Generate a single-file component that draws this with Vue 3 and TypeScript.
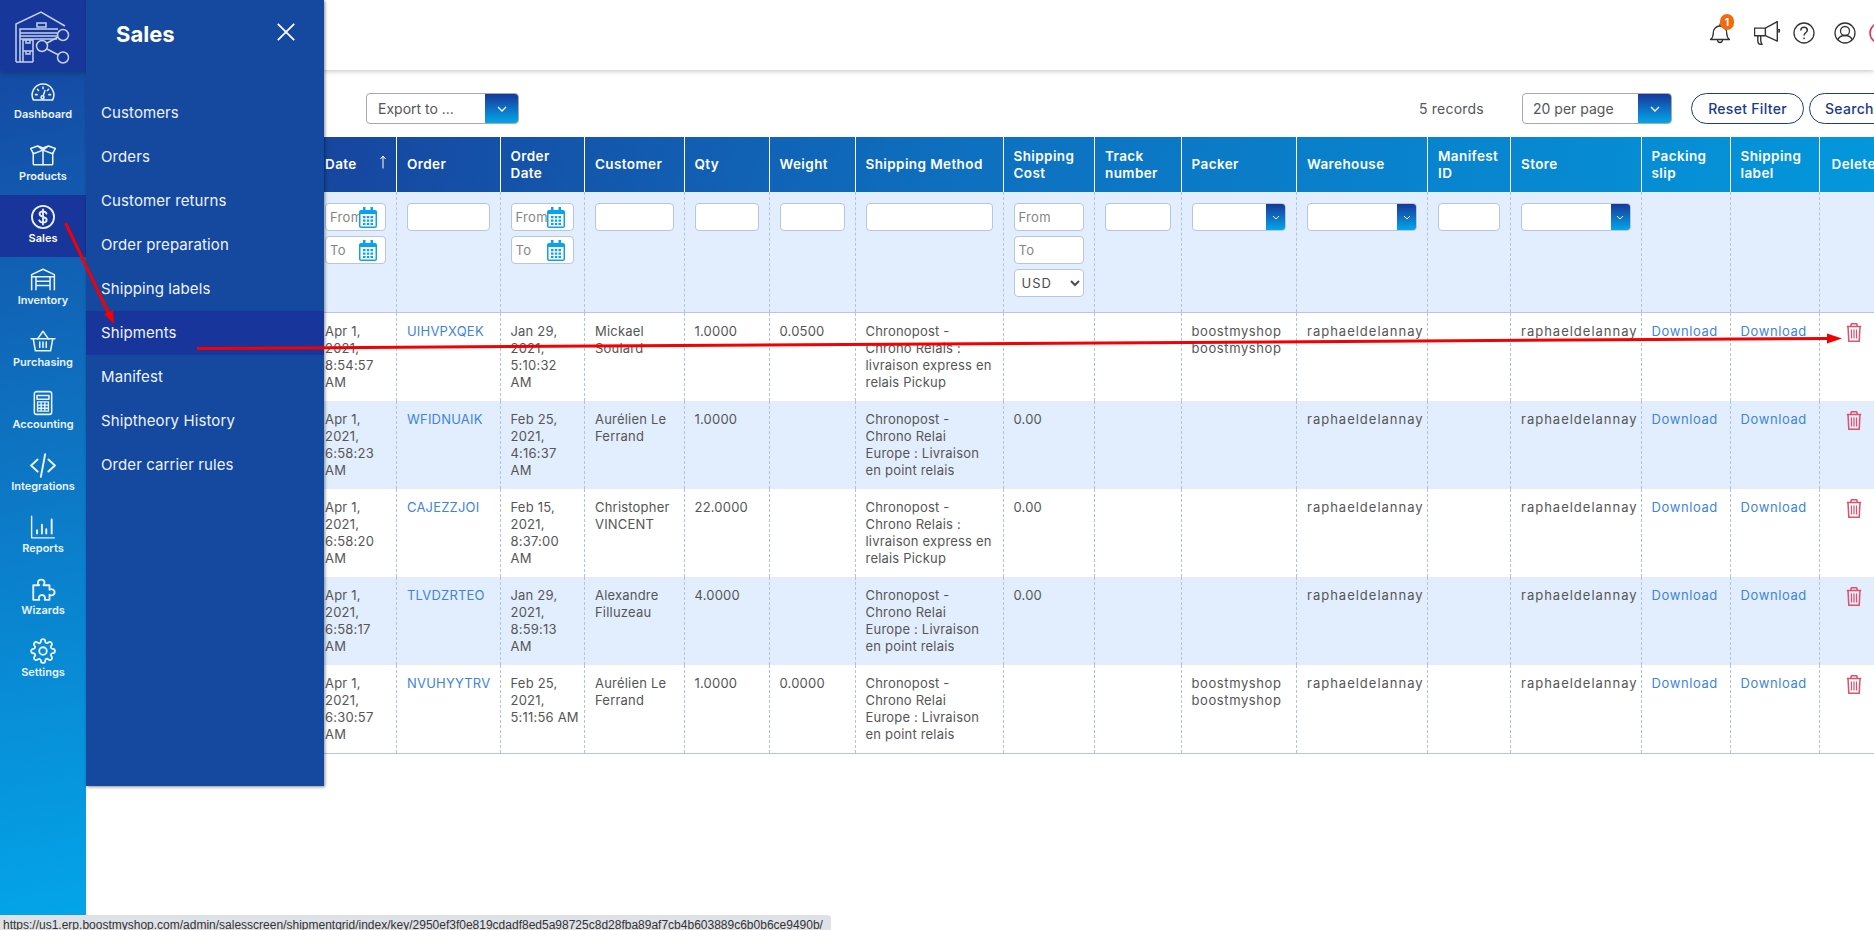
<script setup lang="ts">
interface NavItem { label: string; icon: string; active?: boolean }
const nav: NavItem[] = [
  { label: 'Dashboard', icon: '<path d="M3.2 18.5a10 10 0 1 1 17.6 0z"/><path d="M12 6.5v1.6M6.8 8.6l1.1 1.1M17.2 8.6l-1.1 1.1M5 13.5h1.6M19 13.5h-1.6"/><circle cx="11.6" cy="16" r="1.4"/><path d="M12.2 14.6l1.6-4.8"/>' },
  { label: 'Products', icon: '<path d="M3 10v10c0 .6.4 1 1 1h16c.6 0 1-.4 1-1V10"/><path d="M12 7.500V21"/><path d="M12 7.500L7 3.700.6 6l2.600 4.800zM12 7.500l5-3.800L23.400 6l-2.600 4.800zM7 3.700l5 1.800 5-1.800"/>' },
  { label: 'Sales', active: true, icon: '<circle cx="12" cy="12" r="10.2" stroke-width="1.7"/><path stroke-width="1.7" d="M15.2 8.8c-.5-1.3-1.700-2-3.200-2-1.900 0-3.200 1-3.200 2.500 0 3.500 6.600 1.900 6.600 5.300 0 1.600-1.400 2.600-3.400 2.600-1.700 0-3-.8-3.500-2.200M12 5v14"/>' },
  { label: 'Inventory', icon: '<path d="M1.500 22V8L12 3l10.500 5v14"/><path d="M1.500 10h21M5.500 10v12M18.500 10v12M5.500 14h13M5.500 18h13"/>' },
  { label: 'Purchasing', icon: '<path d="M1 10h22M3 10l2 11h14l2-11"/><path d="M7 10l5-7 5 7"/><path d="M9 13v5M12 13v5M15 13v5"/>' },
  { label: 'Accounting', icon: '<rect x="4" y="1.500" width="16" height="21" rx="2"/><path d="M6.500 5h11v3.500h-11z"/><path d="M7 11h10v8.500H7zM10.300 11v8.500M13.700 11v8.500M7 14h10M7 16.800h10" stroke-width="1.300"/>' },
  { label: 'Integrations', icon: '<path stroke-width="1.800" d="M7 7l-6 5.500L7 18M17 7l6 5.500L17 18M14 2l-4 21"/>' },
  { label: 'Reports', icon: '<path stroke-width="1.300" d="M1.500 2v20h21"/><path stroke-width="1.800" d="M6.500 18v-3M11 18v-8M15 18v-4M20 18V5"/>' },
  { label: 'Wizards', icon: '<path stroke-width="1.700" d="M3 8.500h5.500c-1.200-1-1.500-2-1.200-3 .4-1.500 1.800-2.300 3.200-2.200 1.500.1 2.800 1.200 2.900 2.700 0 .9-.3 1.700-1 2.500H18v4.300c.8-.6 1.700-.8 2.600-.5 1.300.4 2.100 1.500 2.100 2.800 0 1.300-.9 2.400-2.100 2.700-.9.300-1.800 0-2.600-.6V22h-4.500c.5-.9.600-1.800.2-2.700-.5-1.100-1.500-1.800-2.700-1.800s-2.300.7-2.700 1.800c-.3.900-.2 1.800.3 2.700H3z"/>' },
  { label: 'Settings', icon: '<circle cx="12" cy="12" r="3.500" stroke-width="1.700"/><path stroke-width="1.700" d="M19.400 15a1.650 1.650 0 0 0 .33 1.820l.06.06a2 2 0 0 1 0 2.830 2 2 0 0 1-2.830 0l-.06-.06a1.650 1.650 0 0 0-1.820-.33 1.650 1.650 0 0 0-1 1.510V21a2 2 0 0 1-2 2 2 2 0 0 1-2-2v-.09A1.650 1.650 0 0 0 9 19.400a1.650 1.650 0 0 0-1.820.33l-.06.06a2 2 0 0 1-2.830 0 2 2 0 0 1 0-2.830l.06-.06a1.650 1.650 0 0 0 .33-1.820 1.650 1.650 0 0 0-1.510-1H3a2 2 0 0 1-2-2 2 2 0 0 1 2-2h.09A1.650 1.650 0 0 0 4.600 9a1.650 1.650 0 0 0-.33-1.820l-.06-.06a2 2 0 0 1 0-2.830 2 2 0 0 1 2.830 0l.06.06a1.650 1.650 0 0 0 1.820.33H9a1.650 1.650 0 0 0 1-1.510V3a2 2 0 0 1 2-2 2 2 0 0 1 2 2v.09a1.650 1.650 0 0 0 1 1.510 1.650 1.650 0 0 0 1.820-.33l.06-.06a2 2 0 0 1 2.830 0 2 2 0 0 1 0 2.830l-.06.06a1.650 1.650 0 0 0-.33 1.820V9a1.650 1.650 0 0 0 1.510 1H21a2 2 0 0 1 2 2 2 2 0 0 1-2 2h-.09a1.650 1.650 0 0 0-1.510 1z"/>' }
]

const menu = ['Customers', 'Orders', 'Customer returns', 'Order preparation', 'Shipping labels', 'Shipments', 'Manifest', 'Shiptheory History', 'Order carrier rules']

const widths = [81.5, 103.5, 84.5, 99.5, 85, 86, 148, 91.5, 86.5, 115.5, 131, 83, 130.5, 89, 89, 81]
const headers = ['Date', 'Order', 'Order\nDate', 'Customer', 'Qty', 'Weight', 'Shipping Method', 'Shipping\nCost', 'Track\nnumber', 'Packer', 'Warehouse', 'Manifest\nID', 'Store', 'Packing\nslip', 'Shipping\nlabel', 'Delete']

interface Row { date: string; order: string; odate: string; customer: string; qty: string; weight: string; method: string; cost: string; packer: string }
const relais = 'Chronopost -\nChrono Relais :\nlivraison express en\nrelais Pickup'
const europe = 'Chronopost -\nChrono Relai\nEurope : Livraison\nen point relais'
const bms = 'boostmyshop\nboostmyshop'
const rows: Row[] = [
  { date: 'Apr 1,\n2021,\n8:54:57\nAM', order: 'UIHVPXQEK', odate: 'Jan 29,\n2021,\n5:10:32\nAM', customer: 'Mickael\nSoulard', qty: '1.0000', weight: '0.0500', method: relais, cost: '', packer: bms },
  { date: 'Apr 1,\n2021,\n6:58:23\nAM', order: 'WFIDNUAIK', odate: 'Feb 25,\n2021,\n4:16:37\nAM', customer: 'Aurélien Le\nFerrand', qty: '1.0000', weight: '', method: europe, cost: '0.00', packer: '' },
  { date: 'Apr 1,\n2021,\n6:58:20\nAM', order: 'CAJEZZJOI', odate: 'Feb 15,\n2021,\n8:37:00\nAM', customer: 'Christopher\nVINCENT', qty: '22.0000', weight: '', method: relais, cost: '0.00', packer: '' },
  { date: 'Apr 1,\n2021,\n6:58:17\nAM', order: 'TLVDZRTEO', odate: 'Jan 29,\n2021,\n8:59:13\nAM', customer: 'Alexandre\nFilluzeau', qty: '4.0000', weight: '', method: europe, cost: '0.00', packer: '' },
  { date: 'Apr 1,\n2021,\n6:30:57\nAM', order: 'NVUHYYTRV', odate: 'Feb 25,\n2021,\n5:11:56 AM', customer: 'Aurélien Le\nFerrand', qty: '1.0000', weight: '0.0000', method: europe, cost: '', packer: bms }
]
const textFilters = [1, 3, 4, 5, 6, 8, 11]
const selectFilters = [9, 10, 12]
const dateFilters = [0, 2]
</script>

<template>
  <div class="app">
    <aside class="sidebar">
      <div class="logo">
        <svg width="86" height="71" viewBox="0 0 86 71" fill="none" stroke="#c3d0ea" stroke-width="1.500">
          <path d="M16 62V24L41 12l24 14" />
          <path d="M37 23h9v4h-9zM20 62V29h38M20 33h37M20 36h37M20 39h37" />
          <path d="M23 62V40h10v22M23 51h10M26 40v3h4v-3M26 51v3h4v-3M16 62h17" />
          <circle cx="63" cy="35" r="5.500" />
          <circle cx="42" cy="46" r="5.500" />
          <circle cx="63" cy="57.500" r="5.500" />
          <path d="M47 43l11-6M47 49l11.500 6" />
        </svg>
      </div>
      <a v-for="item in nav" :key="item.label" class="nav-item" :class="{ active: item.active }">
        <svg class="nav-icon" viewBox="0 0 24 24" fill="none" stroke="#eaf3ff" stroke-width="1.400" stroke-linejoin="round" stroke-linecap="round" v-html="item.icon"></svg>
        <span>{{ item.label }}</span>
      </a>
    </aside>

    <main class="main">
      <header class="topbar">
        <div class="bell">
          <svg width="22" height="24" viewBox="0 0 22 24" fill="none" stroke="#333" stroke-width="1.300" stroke-linejoin="round">
            <path d="M1.500 18.500c2-1.500 2.800-3 2.800-6.500 0-4 2.700-7 6.700-7s6.700 3 6.700 7c0 3.500.8 5 2.800 6.500z" />
            <path d="M8.500 18.500c0 2 1.100 3 2.500 3s2.500-1 2.500-3M11 5V2.500" />
          </svg>
          <span class="badge">1</span>
        </div>
        <svg class="mega" width="26" height="24" viewBox="0.500 0.500 24 22" fill="none" stroke="#333" stroke-width="1.300" stroke-linejoin="round">
          <path d="M1 7h10v7H1zM11 7l11-6v18l-11-5zM22 8.500h2v2h-2M4 14v4c0 2.500 1 4 2.500 4h1.500c-1-1-1.300-2-1.300-4v-4" />
        </svg>
        <svg class="round-ic help" width="22" height="22" viewBox="0 0 22 22" fill="none" stroke="#333" stroke-width="1.300">
          <circle cx="11" cy="11" r="10" />
          <path stroke-width="1.500" d="M7.800 8.500c0-1.900 1.400-3.200 3.300-3.200s3.200 1.200 3.200 2.900c0 2.600-3.200 2.600-3.200 5.300" />
          <circle cx="11.100" cy="16.300" r=".9" fill="#333" stroke="none" />
        </svg>
        <svg class="round-ic user" width="22" height="22" viewBox="0 0 22 22" fill="none" stroke="#333" stroke-width="1.300">
          <circle cx="11" cy="11" r="10" />
          <circle cx="11" cy="9" r="4.500" />
          <path d="M3.800 18c1-3 3.700-4.500 7.200-4.500s6.200 1.500 7.200 4.500" />
        </svg>
        <svg class="round-ic power" width="22" height="22" viewBox="0 0 22 22" fill="none" stroke="#e8234f" stroke-width="1.500">
          <circle cx="11" cy="11" r="10" />
        </svg>
      </header>

      <div class="toolbar">
        <div class="combo export">
          <span>Export to ...</span>
          <i class="combo-btn"><svg width="10" height="6" viewBox="0 0 10 6" fill="none" stroke="#fff" stroke-width="1.300"><path d="M1 1l4 4 4-4" /></svg></i>
        </div>
        <span class="records">5 records</span>
        <div class="combo perpage">
          <span>20 per page</span>
          <i class="combo-btn"><svg width="10" height="6" viewBox="0 0 10 6" fill="none" stroke="#fff" stroke-width="1.300"><path d="M1 1l4 4 4-4" /></svg></i>
        </div>
        <button class="pill reset">Reset Filter</button>
        <button class="pill search">Search</button>
      </div>

      <div class="table-wrap">
        <table class="grid">
          <colgroup>
            <col v-for="(w, i) in widths" :key="i" :style="{ width: w + 'px' }" />
          </colgroup>
          <thead>
            <tr class="head">
              <th v-for="(h, i) in headers" :key="h">
                <span>{{ h }}</span>
                <svg v-if="i === 0" class="sort" width="8" height="14" viewBox="0 0 8 14" fill="none" stroke="#fff" stroke-width="1">
                  <path d="M4 13.500V1M1.500 4L4 1l2.500 3" />
                </svg>
              </th>
            </tr>
            <tr class="filters">
              <td v-for="(h, i) in headers" :key="h">
                <input v-if="textFilters.includes(i)" class="field" />
                <template v-else-if="dateFilters.includes(i)">
                  <div v-for="p in ['From', 'To']" :key="p" class="date-field">
                    <input class="field" :placeholder="p" />
                    <svg class="cal" width="18" height="21" viewBox="0 0 18 21">
                      <path fill="#09a3ec" d="M2 3h2V0h2.500v3h5V0H14v3h2a2 2 0 0 1 2 2v14a2 2 0 0 1-2 2H2a2 2 0 0 1-2-2V5a2 2 0 0 1 2-2z" />
                      <rect x="1.500" y="7" width="15" height="12.500" fill="#fff" />
                      <path fill="#09a3ec" d="M4 9h2.500v2.200H4zM7.800 9h2.500v2.200H7.800zM11.500 9H14v2.200h-2.500zM4 12.500h2.500v2.200H4zM7.800 12.500h2.500v2.200H7.800zM11.500 12.500H14v2.200h-2.500zM4 16h2.500v2H4zM7.800 16h2.500v2H7.800zM11.500 16H14v2h-2.500z" />
                    </svg>
                  </div>
                </template>
                <template v-else-if="i === 7">
                  <input class="field stack" placeholder="From" />
                  <input class="field stack" placeholder="To" />
                  <select class="field currency"><option>USD</option></select>
                </template>
                <div v-else-if="selectFilters.includes(i)" class="mini-combo">
                  <i class="mini-btn"><svg width="8" height="5" viewBox="0 0 8 5" fill="none" stroke="#fff" stroke-width="1"><path d="M1 1l3 3 3-3" /></svg></i>
                </div>
              </td>
            </tr>
          </thead>
          <tbody>
            <tr v-for="r in rows" :key="r.order" class="row">
              <td>{{ r.date }}</td>
              <td><a class="link">{{ r.order }}</a></td>
              <td>{{ r.odate }}</td>
              <td>{{ r.customer }}</td>
              <td>{{ r.qty }}</td>
              <td>{{ r.weight }}</td>
              <td>{{ r.method }}</td>
              <td>{{ r.cost }}</td>
              <td></td>
              <td class="wide-s">{{ r.packer }}</td>
              <td class="wide-l">raphaeldelannay</td>
              <td></td>
              <td class="wide-l">raphaeldelannay</td>
              <td class="wide-s"><a class="link">Download</a></td>
              <td class="wide-s"><a class="link">Download</a></td>
              <td>
                <svg class="trash" width="16" height="19" viewBox="0 0 16 19" fill="none" stroke="#e0506a" stroke-width="1.500">
                  <path d="M.8 3.500h14.400M5 3.500V1.500c0-.5.3-.8.8-.8h4.400c.5 0 .8.3.8.8v2M2 3.500l.8 14.800h10.400L14 3.500" />
                  <path stroke-width="1.200" d="M5.500 6.500v9M8 6.500v9M10.500 6.500v9" />
                </svg>
              </td>
            </tr>
          </tbody>
        </table>
      </div>
    </main>

    <nav class="panel">
      <div class="panel-head">
        <h2>Sales</h2>
        <svg class="close" width="18" height="18" viewBox="0 0 18 18" fill="none" stroke="#fff" stroke-width="1.800"><path d="M.8.8l16.400 16.400M17.200.8L.8 17.200" /></svg>
      </div>
      <ul>
        <li v-for="m in menu" :key="m" :class="{ on: m === 'Shipments' }">{{ m }}</li>
      </ul>
    </nav>

    <svg class="arrows" width="1874" height="930" viewBox="0 0 1874 930">
      <path d="M65.500 223L109 314" stroke="#f40000" stroke-width="3" fill="none" />
      <path d="M114 324l-10-10 9-4z" fill="#f40000" />
      <path d="M197 348.500L1828 338.500" stroke="#f40000" stroke-width="3" fill="none" />
      <path d="M1842 338.500l-15 5v-10z" fill="#f40000" />
    </svg>

    <div class="status">https://us1.erp.boostmyshop.com/admin/salesscreen/shipmentgrid/index/key/2950ef3f0e819cdadf8ed5a98725c8d28fba89af7cb4b603889c6b0b6ce9490b/</div>
  </div>
</template>

<style>
html, body { margin: 0; background: #fff; }
</style>

<style scoped>
.app {
  position: relative;
  display: flex;
  width: 1874px;
  height: 930px;
  overflow: hidden;
  font-family: Inter, "Open Sans", sans-serif;
  font-size: 13px;
  color: #565656;
  background: #fff;
}
.sidebar {
  flex: 0 0 86px;
  background: linear-gradient(170deg, #16439f 0%, #0f6cbc 40%, #03a6ea 100%);
  color: #eaf3ff;
}
.logo { height: 71px; background: #17389a; box-shadow: 0 2px 6px rgba(0, 0, 0, .25); position: relative; }
.logo svg { display: block; }
.nav-item {
  height: 62px;
  box-sizing: border-box;
  padding-top: 9px;
  display: flex;
  flex-direction: column;
  align-items: center;
  font-size: 11px;
  font-weight: 600;
  line-height: 14px;
  gap: 1px;
}
.nav-item.active { background: #17359a; color: #fff; }
.nav-icon { width: 26px; height: 26px; display: block; }

.main { flex: 1 1 0; min-width: 0; display: flex; flex-direction: column; }
.topbar {
  height: 70px;
  flex: none;
  box-sizing: border-box;
  display: flex;
  align-items: center;
  justify-content: flex-end;
  box-shadow: 0 1px 5px rgba(0, 0, 0, .25);
  padding-bottom: 4px;
}
.bell { position: relative; width: 22px; height: 24px; margin-right: 23px; }
.bell svg { display: block; }
.badge {
  position: absolute;
  left: 11px;
  top: -7px;
  width: 14px;
  height: 16px;
  border-radius: 8px;
  background: #f26a10;
  color: #fff;
  font-size: 10px;
  font-weight: 700;
  line-height: 16px;
  text-align: center;
}
.mega { margin-right: 13px; }
.round-ic { flex: none; }
.help { margin-right: 19px; }
.user { margin-right: 13px; }
.power { margin-right: -17px; }

.toolbar {
  flex: none;
  box-sizing: border-box;
  height: 67px;
  padding: 23px 0 0 280px;
  display: flex;
  align-items: flex-start;
  font-size: 14px;
}
.combo {
  box-sizing: border-box;
  height: 31px;
  border: 1px solid #a9a9a9;
  border-radius: 4px;
  display: flex;
  align-items: center;
  justify-content: space-between;
  padding-left: 11px;
  overflow: hidden;
  flex: none;
}
.export { width: 153px; }
.perpage { width: 150px; margin-left: 39px; padding-left: 10px; }
.combo-btn {
  width: 33px;
  height: 100%;
  display: flex;
  align-items: center;
  justify-content: center;
  background: linear-gradient(180deg, #17389a, #03a6ea);
}
.records { margin-left: 900px; line-height: 31px; width: 64px; white-space: nowrap; letter-spacing: .2px; flex: none; }
.pill {
  box-sizing: border-box;
  flex: none;
  height: 31px;
  border: 1px solid #1a3a8c;
  border-radius: 16px;
  background: #fff;
  color: #1a3a8c;
  font: 500 14px Inter, "Open Sans", sans-serif;
  letter-spacing: .3px;
  padding: 0;
}
.reset { width: 113px; margin-left: 19px; }
.search { width: 100px; margin-left: 5px; text-align: left; padding-left: 15px; }

.table-wrap { padding-left: 229px; overflow: hidden; flex: none; }
.grid { table-layout: fixed; border-collapse: collapse; width: 1585px; }
.head { height: 55px; background: linear-gradient(100deg, #17459f 0%, #0e6fbf 40%, #0398dc 100%); }
.head th {
  box-sizing: border-box;
  padding: 0 10px;
  text-align: left;
  font-size: 13.500px;
  font-weight: 600;
  letter-spacing: .4px;
  line-height: 17px;
  color: #fff;
  white-space: pre;
  border-left: 1px solid rgba(255, 255, 255, .25);
  position: relative;
}
.head th:first-child { border-left: 0; }
.head th:last-child { padding-left: 12px; }
.sort { position: absolute; right: 9px; top: 18px; }
.filters { background: #e2eefd; height: 120px; }
.filters td {
  box-sizing: border-box;
  vertical-align: top;
  padding: 11px 10px 0;
  border-left: 1px dashed #b3c3da;
  border-bottom: 1px solid #b5c6df;
}
.filters td:first-child { border-left: 0; }
.field {
  display: block;
  box-sizing: border-box;
  width: 100%;
  height: 28px;
  margin: 0;
  border: 1px solid #b7c6dc;
  border-radius: 4px;
  background: #fff;
  font: 13px Inter, "Open Sans", sans-serif;
  letter-spacing: .3px;
  color: #4c4c4c;
  padding: 0 4px;
  outline: 0;
}
.field::placeholder { color: #858585; opacity: 1; }
.stack { margin-bottom: 5px; }
.currency { padding: 0 0 0 3px; letter-spacing: 1px; }
.date-field { position: relative; margin-bottom: 5px; }
.cal { position: absolute; right: 9px; top: 4px; }
.mini-combo {
  box-sizing: border-box;
  height: 28px;
  border: 1px solid #b7c6dc;
  border-radius: 4px;
  background: #fff;
  display: flex;
  justify-content: flex-end;
  overflow: hidden;
}
.mini-btn {
  width: 19px;
  display: flex;
  align-items: center;
  justify-content: center;
  background: linear-gradient(180deg, #17389a, #03a6ea);
}
.row { height: 88px; }
.row:nth-child(even) { background: #e2eefd; }
.row td {
  box-sizing: border-box;
  vertical-align: top;
  padding: 10px;
  line-height: 17px;
  white-space: pre;
  letter-spacing: .2px;
  border-left: 1px dashed #b3c3da;
}
.row td.wide-s { letter-spacing: .6px; }
.row td.wide-l { letter-spacing: 1px; }
.row td:first-child { border-left: 0; }
.row:last-child td { border-bottom: 1px solid #b5c6df; }
.link { color: #3f84d8; }
.trash { display: block; margin: 0 0 0 16px; }

.panel {
  position: absolute;
  left: 86px;
  top: 0;
  width: 238px;
  height: 786px;
  background: #15489f;
  color: #eef4ff;
  box-shadow: 1px 1px 3px rgba(0, 0, 0, .45);
}
.panel-head { height: 91px; box-sizing: border-box; padding: 20px 29px 0 30px; display: flex; justify-content: space-between; align-items: flex-start; }
.panel-head h2 { margin: 0; font-size: 22px; line-height: 28px; font-weight: 700; color: #fff; }
.close { margin-top: 3px; }
.panel ul { list-style: none; margin: 0; padding: 0; }
.panel li { height: 44px; line-height: 44px; padding-left: 15px; font-size: 15px; letter-spacing: .1px; }
.panel li.on { background: #17359a; }

.arrows { position: absolute; left: 0; top: 0; pointer-events: none; }
.status {
  position: absolute;
  left: 0;
  bottom: 0;
  width: 831px;
  height: 15px;
  overflow: hidden;
  background: #dee1e6;
  border-top-right-radius: 4px;
  font: 12px "Liberation Sans", sans-serif;
  line-height: 15px;
  padding: 3px 0 0 3px;
  box-sizing: border-box;
  color: #333;
  white-space: nowrap;
}
</style>
